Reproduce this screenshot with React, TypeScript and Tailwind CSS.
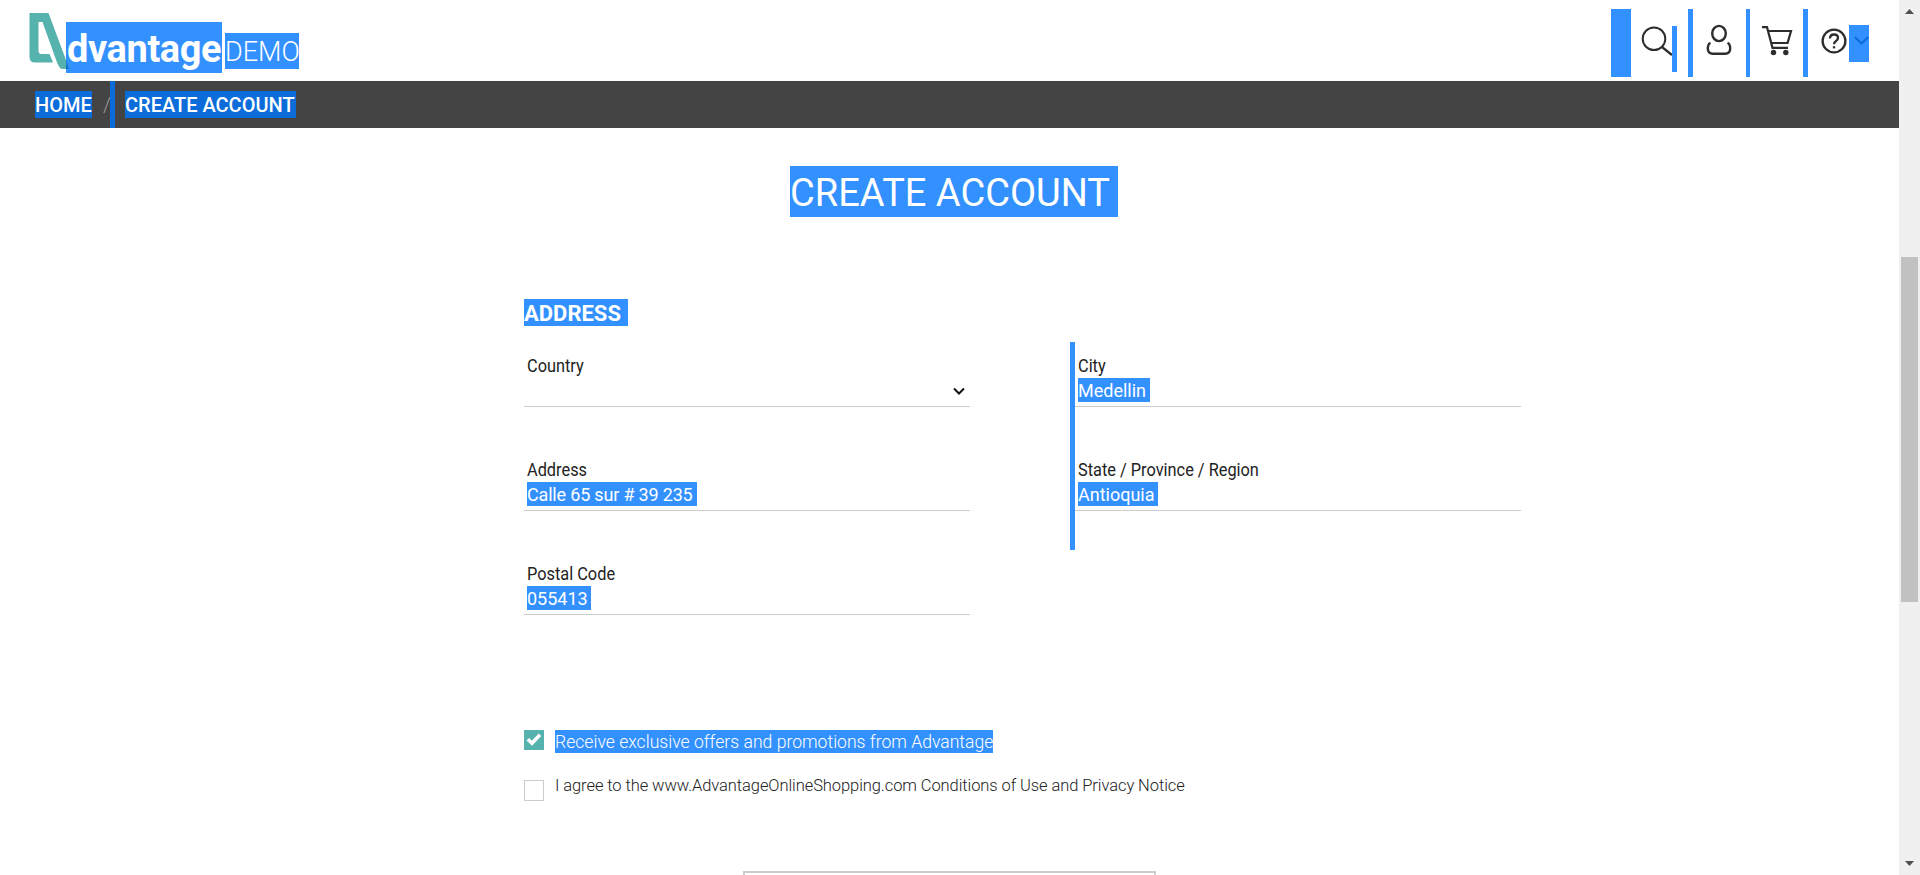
import React from "react";

type FieldProps = {
  label: string;
  value?: string;
  valueClass?: string;
  select?: boolean;
};

function Field({ label, value, valueClass = "", select }: FieldProps) {
  return (
    <div className="h-[104px] w-[446px]">
      <div className="flex h-[65px] flex-col border-b border-[#ccc] pl-[3px] pt-3">
        <span className="block h-6 origin-left scale-x-[.86] whitespace-nowrap text-[19px] leading-6 text-[#222]">{label}</span>
        {value && (
          <span className={`block h-6 whitespace-nowrap bg-[#3390ff] text-[18px] leading-[25px] text-white ${valueClass}`}>{value}</span>
        )}
        {select && (
          <svg className="ml-auto mr-[5px] mt-[9px] h-[9px] w-3" viewBox="0 0 12 9" fill="none" stroke="#111" strokeWidth="2">
            <path d="M1 1.5L6 6.5L11 1.5" />
          </svg>
        )}
      </div>
    </div>
  );
}

function Header() {
  return (
    <header className="flex h-[81px] justify-between pl-[29px] pr-[30px]">
      <div className="flex">
        <svg className="relative z-10 mt-[13px] h-[57px] w-[41px]" viewBox="0 0 41 57">
          <path fill="#55b2ad" fillRule="evenodd" d="M.5 0H19.5L37 47V56H34Q31 56 30 53.5L28 49.5H6Q.5 49.5 .5 44ZM9.5 9V38Q9.5 41 12.5 41H20.5L24 49.5H28L13.5 9Z" />
          <path fill="#1274c9" d="M37 47L40 56H37Z" />
        </svg>
        <span className="-ml-1 mt-[22px] block h-[51px] w-[156px] whitespace-nowrap bg-[#3390ff] pl-px text-[38px] font-bold leading-[55px] tracking-[-0.4px] text-white">dvantage</span>
        <span className="ml-[3px] mt-[33px] block h-9 w-[74px] whitespace-nowrap bg-[#3390ff] text-[27px] font-light leading-[38px] text-white">DEMO</span>
      </div>
      <nav className="flex">
        <div className="mt-[9px] h-[68px] w-5 bg-[#3390ff]" />
        <svg className="ml-[10px] mt-[25px] h-8 w-[31px]" viewBox="0 0 31 32" fill="none" stroke="#2d2d2d" strokeWidth="2">
          <circle cx="13" cy="13.8" r="11.3" />
          <path d="M21 22L31 30" strokeWidth="2.3" />
        </svg>
        <div className="mt-[26px] h-[46px] w-[5px] bg-[#3390ff]" />
        <div className="ml-[11px] mt-[9px] h-[68px] w-[5px] bg-[#3390ff]" />
        <svg className="ml-[13px] mt-6 h-8 w-[26px]" viewBox="0 0 26 32" fill="none" stroke="#2d2d2d" strokeWidth="2.4">
          <ellipse cx="13" cy="9.5" rx="6.8" ry="7.6" />
          <path d="M4.5 18.8Q1.8 20 1.8 24.5Q1.8 29.7 7 29.7H19Q24.2 29.7 24.2 24.5Q24.2 20 21.5 18.8" />
        </svg>
        <div className="ml-[14px] mt-[9px] h-[68px] w-1 bg-[#3390ff]" />
        <svg className="ml-3 mt-[25px] h-8 w-[31px]" viewBox="0 0 31 32" fill="none" stroke="#2d2d2d" strokeWidth="2.2">
          <path d="M0 2.2H5L10.5 22.8H26M7 6H29L25.6 18H9" />
          <circle cx="11.5" cy="27.5" r="2.7" fill="#2d2d2d" stroke="none" />
          <circle cx="23.8" cy="27.5" r="2.7" fill="#2d2d2d" stroke="none" />
        </svg>
        <div className="ml-[10px] mt-[9px] h-[68px] w-[5px] bg-[#3390ff]" />
        <svg className="ml-[13px] mt-7 h-[26px] w-[26px]" viewBox="0 0 26 26" fill="none" stroke="#2d2d2d" strokeWidth="2.3">
          <circle cx="13" cy="13" r="11.4" />
          <path d="M9 10.5Q9 6.5 13 6.5Q17 6.5 17 10Q17 11.7 15 13Q13 14.3 13 16.3" />
          <path d="M13 18.2V20.4" />
        </svg>
        <div className="ml-[2px] mt-[25px] h-[37px] w-5 bg-[#3390ff] pl-[5px] pt-[11px]">
          <svg className="h-[10px] w-[15px]" viewBox="0 0 15 10" fill="none" stroke="#0b6cda" strokeWidth="2">
            <path d="M.8 1L7.5 7.5L14.2 1" />
          </svg>
        </div>
      </nav>
    </header>
  );
}

function Scrollbar() {
  return (
    <div className="flex h-full w-[21px] flex-col items-center justify-between bg-[#f0f0f0] pb-[9px] pt-[9px]">
      <svg className="h-[5px] w-[9px]" viewBox="0 0 9 5"><path d="M4.5 0L9 5H0Z" fill="#505050" /></svg>
      <div className="-mt-[2px] mb-[5px] flex w-[17px] grow flex-col">
        <div className="h-[245px]" />
        <div className="h-[345px] bg-[#c1c1c1]" />
      </div>
      <svg className="h-[5px] w-[9px]" viewBox="0 0 9 5"><path d="M0 0H9L4.5 5Z" fill="#505050" /></svg>
    </div>
  );
}

export default function App() {
  return (
    <div className="flex h-[875px] w-[1920px] overflow-hidden bg-white font-['Roboto',sans-serif]">
      <div className="h-full w-[1899px] overflow-hidden">
        <Header />
        <div className="flex h-[47px] bg-[#444] pl-[35px] text-[20px] font-medium leading-[29px] text-white">
          <span className="mt-[10px] block h-[27px] w-[57px] whitespace-nowrap bg-[#0b6cda]">HOME</span>
          <span className="ml-[11px] mt-[10px] block w-[7px] font-light text-[#999]">/</span>
          <div className="h-full w-[5px] bg-[#0b6cda]" />
          <span className="ml-[10px] mt-[10px] block h-[27px] w-[171px] whitespace-nowrap bg-[#0b6cda]">CREATE ACCOUNT</span>
        </div>
        <h1 className="ml-[790px] mt-[38px] h-[51px] w-[328px] whitespace-nowrap bg-[#3390ff] text-[38px] leading-[55px] text-white">CREATE ACCOUNT</h1>
        <main className="ml-[524px] mt-[82px]">
          <h2 className="h-[27px] w-[104px] whitespace-nowrap bg-[#3390ff] text-[22px] font-bold leading-[29px] text-white">ADDRESS</h2>
          <div className="mt-4 flex">
            <div>
              <Field label="Country" select />
              <Field label="Address" value="Calle 65 sur # 39 235" valueClass="w-[170px] tracking-[-0.18px]" />
              <Field label="Postal Code" value="055413" valueClass="w-16" />
            </div>
            <div className="ml-[100px] h-52 w-[5px] bg-[#3390ff]" />
            <div>
              <Field label="City" value="Medellin" valueClass="w-[72px]" />
              <Field label="State / Province / Region" value="Antioquia" valueClass="w-20" />
            </div>
          </div>
          <div className="mt-[76px] flex">
            <div className="h-5 w-5 bg-[#55b2ad]">
              <svg className="h-5 w-5" viewBox="0 0 20 20" fill="none" stroke="white" strokeWidth="3.6">
                <path d="M3.8 9.2L8 13.2L16 4.8" />
              </svg>
            </div>
            <span className="ml-[11px] block h-[23px] w-[438px] whitespace-nowrap bg-[#3390ff] text-[17.6px] font-light leading-6 text-white">Receive exclusive offers and promotions from Advantage</span>
          </div>
          <div className="mt-[27px] flex">
            <div className="h-[21px] w-5 border border-[#ccc]" />
            <span className="-mt-[6px] ml-[11px] block whitespace-nowrap text-[16.5px] font-light leading-6 tracking-[-0.08px] text-[#222]">I agree to the www.AdvantageOnlineShopping.com Conditions of Use and Privacy Notice</span>
          </div>
          <div className="ml-[219px] mt-[70px] h-[50px] w-[413px] border-2 border-[#ccc]" />
        </main>
      </div>
      <Scrollbar />
    </div>
  );
}
